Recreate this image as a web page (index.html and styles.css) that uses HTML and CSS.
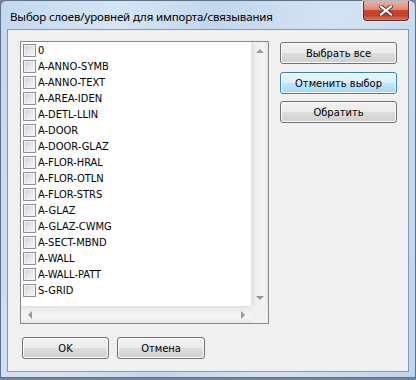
FILE: index.html
```html
<!DOCTYPE html>
<html>
<head>
<meta charset="utf-8">
<title>Выбор слоев/уровней для импорта/связывания</title>
<link rel="stylesheet" href="styles.css">
</head>
<body>
<div class="window">
	<div class="titlebar">
		<span class="title">Выбор слоев/уровней для импорта/связывания</span>
		<div class="close">
			<svg width="14" height="11" viewBox="0 0 14 11">
				<path d="M2 1.5 L12 9.5 M12 1.5 L2 9.5" stroke="#3a3a3a" stroke-width="4" stroke-linecap="square"/>
				<path d="M2 1.5 L12 9.5 M12 1.5 L2 9.5" stroke="#fff" stroke-width="2.2" stroke-linecap="square"/>
			</svg>
		</div>
	</div>
	<div class="client">
		<div class="top">
			<div class="listbox">
				<div class="list-area">
					<ul class="items">
						<li><span class="check"></span>0</li>
						<li><span class="check"></span>A-ANNO-SYMB</li>
						<li><span class="check"></span>A-ANNO-TEXT</li>
						<li><span class="check"></span>A-AREA-IDEN</li>
						<li><span class="check"></span>A-DETL-LLIN</li>
						<li><span class="check"></span>A-DOOR</li>
						<li><span class="check"></span>A-DOOR-GLAZ</li>
						<li><span class="check"></span>A-FLOR-HRAL</li>
						<li><span class="check"></span>A-FLOR-OTLN</li>
						<li><span class="check"></span>A-FLOR-STRS</li>
						<li><span class="check"></span>A-GLAZ</li>
						<li><span class="check"></span>A-GLAZ-CWMG</li>
						<li><span class="check"></span>A-SECT-MBND</li>
						<li><span class="check"></span>A-WALL</li>
						<li><span class="check"></span>A-WALL-PATT</li>
						<li><span class="check"></span>S-GRID</li>
					</ul>
					<div class="vscroll">
						<span class="arr"><i class="tri up"></i></span>
						<span class="arr"><i class="tri down"></i></span>
					</div>
				</div>
				<div class="hbar">
					<div class="hscroll">
						<span class="arr"><i class="tri left"></i></span>
						<span class="arr"><i class="tri right"></i></span>
					</div>
					<div class="corner"></div>
				</div>
			</div>
			<div class="side">
				<button class="btn">Выбрать все</button>
				<button class="btn hot">Отменить выбор</button>
				<button class="btn">Обратить</button>
			</div>
		</div>
		<div class="bottom">
			<button class="btn ok">OK</button>
			<button class="btn cancel">Отмена</button>
		</div>
	</div>
</div>
</body>
</html>
```

FILE: styles.css
```css
*{ margin:0; padding:0; box-sizing:border-box; list-style:none;}
body{ background:#7c838b; width:416px; height:380px; overflow:hidden;}

.window{ width:416px; border:1px solid #5f7187; border-radius:6px 6px 0 0; padding:0 6px 5px;
	background:linear-gradient(100deg, #c3d8ee 0%, #d6e5f4 25%, #c2d7ed 45%, #d3e3f3 70%, #bfd5ec 100%);}

.titlebar{ height:28px; display:flex; justify-content:space-between; align-items:flex-start;}
.title{ align-self:center; padding-left:3px; margin-top:2px; font:11.5px "Noto Sans", sans-serif; color:#000; letter-spacing:-0.15px;}
.close{ width:46px; height:20px; display:flex; align-items:center; justify-content:center;
	border:1px solid #6a2a22; border-top:none; border-radius:0 0 4px 4px;
	background:linear-gradient(#eab0a4 0%, #dc8a78 45%, #c8462f 50%, #c23e2a 75%, #d77a62 100%);
	box-shadow:0 0 0 1px rgba(255,255,255,0.5);}

.client{ background:#f0f0f0; border:1px solid #8497ab; padding:11px 11px 12px 12px;}
.top{ display:flex; gap:11px;}

.listbox{ width:249px; height:283px; border:1px solid #828790; background:#fff; display:flex; flex-direction:column;}
.list-area{ flex:1; display:flex;}
.items{ flex:1;}
.items li{ height:16px; display:flex; align-items:center; gap:2px; padding-left:2px; font:11px "DejaVu Sans Condensed", sans-serif; color:#000;}
.check{ width:13px; height:13px; border:1px solid #8e8f8f; background:linear-gradient(135deg, #c9cdd2 0%, #e6e7e9 50%, #fbfbfb 100%); box-shadow:inset 0 0 0 1px #f4f4f4;}

.vscroll{ width:17px; display:flex; flex-direction:column; justify-content:space-between; background:linear-gradient(to right, #e2e2e2, #efefef 30%, #f4f4f4 70%, #e6e6e6);}
.hbar{ height:17px; display:flex;}
.hscroll{ flex:1; display:flex; justify-content:space-between; background:linear-gradient(#e2e2e2, #efefef 30%, #f4f4f4 70%, #e6e6e6);}
.corner{ width:17px; background:#f0f0f0;}
.arr{ width:17px; height:17px; display:flex; align-items:center; justify-content:center;}
.tri{ width:0; height:0; border:4px solid transparent;}
.tri.up{ border-bottom-color:#9a9a9a; border-top:none;}
.tri.down{ border-top-color:#9a9a9a; border-bottom:none;}
.tri.left{ border-right-color:#9a9a9a; border-left:none;}
.tri.right{ border-left-color:#9a9a9a; border-right:none;}

.side{ width:117px; display:flex; flex-direction:column; padding-top:1px;}
.btn{ height:22px; border:1px solid #707070; border-radius:3px; font:11px "DejaVu Sans Condensed", sans-serif; color:#000;
	background:linear-gradient(#f2f2f2 0%, #ebebeb 50%, #dddddd 50%, #cfcfcf 100%); box-shadow:inset 0 0 0 1px #fcfcfc;}
.side .btn + .btn{ margin-top:8px;}
.side .btn:last-child{ margin-top:7px;}
.btn.hot{ border-color:#3c7fb1; background:linear-gradient(#eaf6fd 0%, #d9f0fc 50%, #bee6fd 50%, #a7d9f5 100%);}

.bottom{ display:flex; gap:8px; margin-top:13px; padding-left:2px;}
.ok{ width:87px;}
.cancel{ width:88px;}
```
